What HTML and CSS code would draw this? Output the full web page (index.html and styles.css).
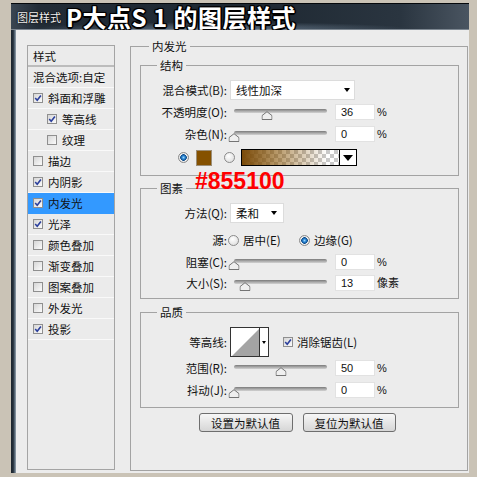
FILE: index.html
```html
<!DOCTYPE html>
<html lang="zh-CN">
<head>
<meta charset="utf-8">
<title>图层样式</title>
<link rel="stylesheet" href="styles.css">
</head>
<body>
<div class="window">
  <div class="titlebar">
    <span class="t-small">图层样式</span>
    <span class="t-big">P大点S 1 的图层样式</span>
  </div>
  <div class="main">
    <div class="frame-left"></div>
    <div class="content">
      <div class="styles">
        <div class="ph">样式</div>
        <div class="item">混合选项:自定</div>
        <div class="item"><span class="cb"><svg width="8" height="8" viewBox="0 0 8 8"><path d="M1.2 4 3.2 6.2 6.9 1.4" fill="none" stroke="#2b3f9c" stroke-width="1.6"/></svg></span>斜面和浮雕</div>
        <div class="item sub"><span class="cb"><svg width="8" height="8" viewBox="0 0 8 8"><path d="M1.2 4 3.2 6.2 6.9 1.4" fill="none" stroke="#2b3f9c" stroke-width="1.6"/></svg></span>等高线</div>
        <div class="item sub"><span class="cb"></span>纹理</div>
        <div class="item"><span class="cb"></span>描边</div>
        <div class="item"><span class="cb"><svg width="8" height="8" viewBox="0 0 8 8"><path d="M1.2 4 3.2 6.2 6.9 1.4" fill="none" stroke="#2b3f9c" stroke-width="1.6"/></svg></span>内阴影</div>
        <div class="item active"><span class="cb"><svg width="8" height="8" viewBox="0 0 8 8"><path d="M1.2 4 3.2 6.2 6.9 1.4" fill="none" stroke="#2b3f9c" stroke-width="1.6"/></svg></span>内发光</div>
        <div class="item"><span class="cb"><svg width="8" height="8" viewBox="0 0 8 8"><path d="M1.2 4 3.2 6.2 6.9 1.4" fill="none" stroke="#2b3f9c" stroke-width="1.6"/></svg></span>光泽</div>
        <div class="item"><span class="cb"></span>颜色叠加</div>
        <div class="item"><span class="cb"></span>渐变叠加</div>
        <div class="item"><span class="cb"></span>图案叠加</div>
        <div class="item"><span class="cb"></span>外发光</div>
        <div class="item"><span class="cb"><svg width="8" height="8" viewBox="0 0 8 8"><path d="M1.2 4 3.2 6.2 6.9 1.4" fill="none" stroke="#2b3f9c" stroke-width="1.6"/></svg></span>投影</div>
      </div>

      <fieldset class="outer">
        <legend>内发光</legend>

        <fieldset class="grp g1">
          <legend>结构</legend>
          <div class="row r-sel">
            <span class="lbl">混合模式(B):</span>
            <div class="select w125"><span>线性加深</span><span class="caret"></span></div>
          </div>
          <div class="row r-sl mt3">
            <span class="lbl">不透明度(O):</span>
            <div class="slider"><span class="thumb" style="left:36%"><svg width="11" height="9" viewBox="0 0 11 9"><path d="M5.5 .7 10.5 4.6V8.5H.5V4.6Z" fill="#efefef" stroke="#747474"/></svg></span></div>
            <div class="num">36</div><span class="unit">%</span>
          </div>
          <div class="row r-sl mt4">
            <span class="lbl">杂色(N):</span>
            <div class="slider"><span class="thumb" style="left:0%"><svg width="11" height="9" viewBox="0 0 11 9"><path d="M5.5 .7 10.5 4.6V8.5H.5V4.6Z" fill="#efefef" stroke="#747474"/></svg></span></div>
            <div class="num">0</div><span class="unit">%</span>
          </div>
          <div class="row r-color">
            <span class="radio on c-r1"></span>
            <span class="swatch"></span>
            <span class="radio c-r2"></span>
            <div class="grad"><span class="grad-bar"></span><span class="grad-arr"><span class="caret-big"></span></span></div>
          </div>
        </fieldset>

        <fieldset class="grp g2">
          <legend>图素<span class="anno">#855100</span></legend>
          <div class="row r-sel">
            <span class="lbl">方法(Q):</span>
            <div class="select w54"><span>柔和</span><span class="caret"></span></div>
          </div>
          <div class="row r-src">
            <span class="lbl">源:</span>
            <span class="opt opt1"><span class="radio"></span><span>居中(E)</span></span>
            <span class="opt"><span class="radio on"></span><span>边缘(G)</span></span>
          </div>
          <div class="row r-sl mt5">
            <span class="lbl">阻塞(C):</span>
            <div class="slider"><span class="thumb" style="left:0%"><svg width="11" height="9" viewBox="0 0 11 9"><path d="M5.5 .7 10.5 4.6V8.5H.5V4.6Z" fill="#efefef" stroke="#747474"/></svg></span></div>
            <div class="num">0</div><span class="unit">%</span>
          </div>
          <div class="row r-sl mt3">
            <span class="lbl">大小(S):</span>
            <div class="slider"><span class="thumb" style="left:11.8%"><svg width="11" height="9" viewBox="0 0 11 9"><path d="M5.5 .7 10.5 4.6V8.5H.5V4.6Z" fill="#efefef" stroke="#747474"/></svg></span></div>
            <div class="num">13</div><span class="unit">像素</span>
          </div>
        </fieldset>

        <fieldset class="grp g3">
          <legend>品质</legend>
          <div class="row r-contour">
            <span class="lbl">等高线:</span>
            <div class="contour">
              <span class="cv"><svg width="28" height="28" viewBox="0 0 28 28"><polygon points="1,28 28,1 28,28" fill="#a4a4a4"/></svg></span>
              <span class="carr"><span class="caret-s"></span></span>
            </div>
            <span class="cb aa"><svg width="8" height="8" viewBox="0 0 8 8"><path d="M1.2 4 3.2 6.2 6.9 1.4" fill="none" stroke="#2b3f9c" stroke-width="1.6"/></svg></span><span>消除锯齿(L)</span>
          </div>
          <div class="row r-sl mt2">
            <span class="lbl">范围(R):</span>
            <div class="slider"><span class="thumb" style="left:50%"><svg width="11" height="9" viewBox="0 0 11 9"><path d="M5.5 .7 10.5 4.6V8.5H.5V4.6Z" fill="#efefef" stroke="#747474"/></svg></span></div>
            <div class="num">50</div><span class="unit">%</span>
          </div>
          <div class="row r-sl mt4">
            <span class="lbl">抖动(J):</span>
            <div class="slider"><span class="thumb" style="left:0%"><svg width="11" height="9" viewBox="0 0 11 9"><path d="M5.5 .7 10.5 4.6V8.5H.5V4.6Z" fill="#efefef" stroke="#747474"/></svg></span></div>
            <div class="num">0</div><span class="unit">%</span>
          </div>
        </fieldset>

        <div class="btns">
          <div class="btn b1">设置为默认值</div>
          <div class="btn b2">复位为默认值</div>
        </div>
      </fieldset>
    </div>
  </div>
</div>
</body>
</html>
```

FILE: styles.css
```css
* { box-sizing: border-box; }
html, body { margin: 0; padding: 0; }
body {
  width: 477px; height: 477px; overflow: hidden;
  background: #cac3b6;
  font-family: "Noto Sans CJK SC", "Noto Sans", sans-serif;
  font-size: 11.5px; line-height: 14px; color: #111;
}
.window { margin: 3px 0 0 11px; width: 458px; height: 470px; display: flex; flex-direction: column; }

.titlebar {
  flex: none; height: 27px; display: flex; align-items: center; gap: 5px; padding-left: 6px;
  border-top: 1px solid #05080b; border-bottom: 1px solid #7d8791;
  background:
    radial-gradient(190px 7px at 210px 100%, rgba(150,175,200,.55), rgba(150,175,200,0)),
    linear-gradient(90deg, #3a4652 0, #222c36 6%, #1f2933 55%, #2a3540 85%, #4a5561 100%);
}
.t-small { font-size: 11px; line-height: 14px; color: #f2f2f2; text-shadow: 0 0 2px #000, 0 0 1px #000; }
.t-big {
  font-size: 24px; font-weight: 700; line-height: 24px; letter-spacing: .5px; color: #fff; white-space: nowrap;
  text-shadow: -1.5px 0 0 #000, 1.5px 0 0 #000, 0 -1.5px 0 #000, 0 1.5px 0 #000,
    -1px -1px 0 #000, 1px -1px 0 #000, -1px 1px 0 #000, 1px 1px 0 #000, 0 0 3px #000;
}

.main { flex: 1; display: flex; min-height: 0; }
.frame-left { flex: none; width: 5px; background: linear-gradient(90deg, #1a232c, #26313c 45%, #5d6d7c 75%, #98a4ae); }
.content { flex: 1; background: #ececec; display: flex; align-items: flex-start; gap: 15px; padding: 9px 0 0 11px; }

/* styles list */
.styles { flex: none; width: 88px; height: 425px; margin-top: 6px; border: 1px solid #a4a4a4; background: #ebebeb; }
.ph { height: 21px; padding-left: 5px; display: flex; align-items: center; border-bottom: 2px solid #bcbcbc; }
.item { height: 21px; display: flex; align-items: center; padding-left: 5px; border-bottom: 1px solid #f9f9f9; white-space: nowrap; }
.item.sub { padding-left: 19px; }
.item.active { background: #3399ff; border-bottom-color: #3399ff; }
.cb {
  flex: none; width: 10px; height: 10px; margin-right: 5px;
  border: 1px solid #8f8f8f; background: linear-gradient(135deg, #d6d6d6, #fbfbfb);
  display: flex; align-items: center; justify-content: center;
}
.cb svg { display: block; }

/* groups */
fieldset { margin: 0; padding: 0; border: 1px solid #a3a3a3; min-width: 0; }
legend { padding: 0 3px; height: 14px; line-height: 14px; font-size: 11.5px; }
.outer { flex: none; width: 338px; height: 432px; padding: 0 8px 0 9px; }
.outer > legend { margin-left: 9px; }
.grp { width: 319px; padding: 0 0 9px; }
.grp > legend { margin-left: 16px; position: relative; }
.g1 { margin-top: 5px; }
.g2 { margin-top: 5px; padding-bottom: 6px; }
.g3 { margin-top: 6px; padding-bottom: 8px; }
.anno {
  position: absolute; left: 38px; top: -11px; white-space: nowrap;
  font: 700 23px/23px "Liberation Sans", Arial, sans-serif; color: #ff0000;
}

/* rows */
.row { display: flex; align-items: center; white-space: nowrap; }
.lbl { flex: none; width: 86px; margin-right: 3px; text-align: right; }
.r-sel { margin-top: 8px; height: 20px; }
.r-sl { height: 18px; }
.mt2 { margin-top: 2px; }
.mt3 { margin-top: 3px; }
.mt4 { margin-top: 4px; }
.mt5 { margin-top: 5px; }
.r-color { margin-top: 6px; height: 17px; }
.r-src { margin-top: 9px; height: 16px; }
.r-contour { margin-top: 8px; height: 30px; }

.select {
  flex: none; height: 20px; background: #fff; border: 1px solid #dcdcdc;
  display: flex; align-items: center; justify-content: space-between; padding: 0 4px 0 5px;
}
.w125 { width: 125px; }
.w54 { width: 54px; padding-right: 6px; }
.caret { width: 0; height: 0; border-left: 3.5px solid transparent; border-right: 3.5px solid transparent; border-top: 4px solid #000; }

.slider {
  flex: none; position: relative; width: 93px; height: 4px; margin: 0 0 2px 4px;
  border-radius: 2px; background: linear-gradient(#7a7a7a, #a8a8a8 50%, #d2d2d2);
}
.thumb { position: absolute; top: 2px; width: 11px; height: 9px; transform: translateX(-50%); display: block; }
.thumb svg { display: block; }
.num {
  flex: none; width: 40px; height: 16px; margin-left: 8px; padding-left: 5px;
  background: #fff; border: 1px solid #e2e2e2;
  font-family: "Liberation Sans", Arial, sans-serif; font-size: 11px; line-height: 14px;
}
.unit { margin-left: 2px; font-family: "Liberation Sans", "Noto Sans CJK SC", sans-serif; font-size: 11px; }

.radio {
  flex: none; width: 11px; height: 11px; border-radius: 50%; border: 1px solid #8a8a8a;
  background: radial-gradient(circle at 40% 35%, #fff, #d8d8d8);
}
.radio.on { background: radial-gradient(circle, #9ad8ff 0, #2a86d4 1.6px, #0d4a88 3px, #f4f4f4 3.6px, #d6d6d6 5px); }
.c-r1 { margin-left: 37px; }
.c-r2 { margin-left: 12px; }
.swatch { flex: none; width: 16px; height: 16px; margin-left: 7px; background: #855100; border: 1px solid #9c8e78; }
.grad { flex: none; width: 116px; height: 17px; margin-left: 6px; border: 1px solid #000; display: flex; background: #fff; }
.grad-bar {
  flex: 1;
  background-image:
    linear-gradient(90deg, rgba(122,74,8,1) 0%, rgba(133,81,0,.6) 35%, rgba(133,81,0,0) 88%),
    conic-gradient(#c9c9c9 0 25%, #fff 0 50%, #c9c9c9 0 75%, #fff 0);
  background-size: 100% 100%, 8px 8px;
}
.grad-arr { flex: none; width: 17px; border-left: 1px solid #000; display: flex; align-items: center; justify-content: center; }
.caret-big { width: 0; height: 0; border-left: 5px solid transparent; border-right: 5px solid transparent; border-top: 6px solid #000; }

.opt { display: flex; align-items: center; gap: 4px; }
.opt1 { width: 71px; margin-left: -2px; }

.contour { flex: none; width: 39px; height: 30px; border: 1px solid #333; background: #fff; display: flex; }
.cv { flex: none; width: 28px; height: 28px; }
.cv svg { display: block; }
.carr { flex: 1; border-left: 1px solid #333; display: flex; align-items: center; justify-content: center; }
.caret-s { width: 0; height: 0; border-left: 2.5px solid transparent; border-right: 2.5px solid transparent; border-top: 3px solid #000; }
.cb.aa { margin-left: 14px; margin-right: 4px; }

.btns { display: flex; justify-content: center; gap: 10px; margin-top: 5px; padding-right: 5px; }
.btn {
  height: 19px; border: 1px solid #6e6e6e; border-radius: 3px;
  background: linear-gradient(#f7f7f7, #e6e6e6 50%, #d6d6d6);
  display: flex; align-items: center; justify-content: center; font-size: 11.5px;
}
.b1 { width: 94px; }
.b2 { width: 93px; }
```
